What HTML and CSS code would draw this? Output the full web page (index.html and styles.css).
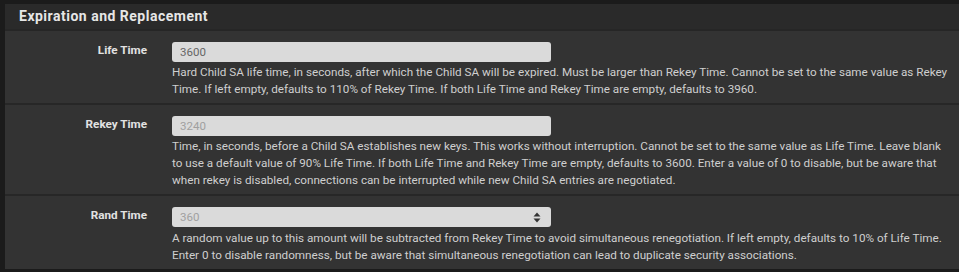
FILE: index.html
```html
<!DOCTYPE html>
<html lang="en">
<head>
    <meta charset="UTF-8">
    <meta name="viewport" content="width=device-width, initial-scale=1.0">
    <title>Expiration and Replacement</title>
    <link rel="stylesheet" href="styles.css">
</head>
<body>
    <div class="panel">
        <h2 class="panel-heading">Expiration and Replacement</h2>
        <div class="panel-body">
            <div class="form-row">
                <label class="form-label" for="lifetime">Life Time</label>
                <div class="form-field">
                    <input type="text" id="lifetime" value="3600">
                    <p class="help">Hard Child SA life time, in seconds, after which the Child SA will be expired. Must be larger than Rekey Time. Cannot be set to the same value as Rekey Time. If left empty, defaults to 110% of Rekey Time. If both Life Time and Rekey Time are empty, defaults to 3960.</p>
                </div>
            </div>
            <div class="form-row">
                <label class="form-label" for="rekey">Rekey Time</label>
                <div class="form-field">
                    <input type="text" id="rekey" placeholder="3240">
                    <p class="help">Time, in seconds, before a Child SA establishes new keys. This works without interruption. Cannot be set to the same value as Life Time. Leave blank to use a default value of 90% Life Time. If both Life Time and Rekey Time are empty, defaults to 3600. Enter a value of 0 to disable, but be aware that when rekey is disabled, connections can be interrupted while new Child SA entries are negotiated.</p>
                </div>
            </div>
            <div class="form-row">
                <label class="form-label" for="rand">Rand Time</label>
                <div class="form-field">
                    <div class="select-wrap">
                        <input type="text" id="rand" placeholder="360">
                        <svg class="spin" width="8" height="11" viewBox="0 0 8 11">
                            <path d="M4 0.5 L7.5 4.5 L0.5 4.5 Z" fill="#333"/>
                            <path d="M4 10.5 L7.5 6.5 L0.5 6.5 Z" fill="#333"/>
                        </svg>
                    </div>
                    <p class="help">A random value up to this amount will be subtracted from Rekey Time to avoid simultaneous renegotiation. If left empty, defaults to 10% of Life Time. Enter 0 to disable randomness, but be aware that simultaneous renegotiation can lead to duplicate security associations.</p>
                </div>
            </div>
        </div>
    </div>
</body>
</html>
```

FILE: styles.css
```css
body {
    margin: 0;
    background-color: #1b1b1b;
    font-family: Roboto, "Liberation Sans", sans-serif;
    color: #d0d0d0;
}
.panel {
    margin: 4px 0 0 5px;
    background: #333333;
}
.panel-heading {
    margin: 0;
    height: 25px;
    line-height: 25px;
    padding-left: 14px;
    background: #2a2a2a;
    border-bottom: 2px solid #262626;
    font-size: 14px;
    font-weight: bold;
    color: #e6e6e6;
    letter-spacing: 0.5px;
}
.form-row {
    display: flex;
    padding: 11px 0 5px;
    border-bottom: 2px solid #272727;
}
.form-row:last-child {
    border-bottom: none;
}
.form-label {
    width: 142px;
    flex-shrink: 0;
    margin-right: 25px;
    text-align: right;
    font-size: 11.7px;
    font-weight: bold;
    line-height: 17px;
    color: #e2e2e2;
}
.form-field {
    width: 782px;
}
input {
    display: block;
    box-sizing: border-box;
    width: 379px;
    height: 20px;
    padding: 0 8px;
    border: none;
    border-radius: 3px;
    background: #dadada;
    font-family: Roboto, "Liberation Sans", sans-serif;
    font-size: 11.5px;
    color: #666;
}
input::placeholder {
    color: #a0a0a0;
}
.select-wrap {
    position: relative;
    width: 379px;
    margin-bottom: 3px;
}
.spin {
    position: absolute;
    right: 10px;
    top: 5px;
}
.help {
    margin: 2px 0 0;
    font-size: 11.7px;
    line-height: 17px;
    color: #cfcfcf;
}
```
